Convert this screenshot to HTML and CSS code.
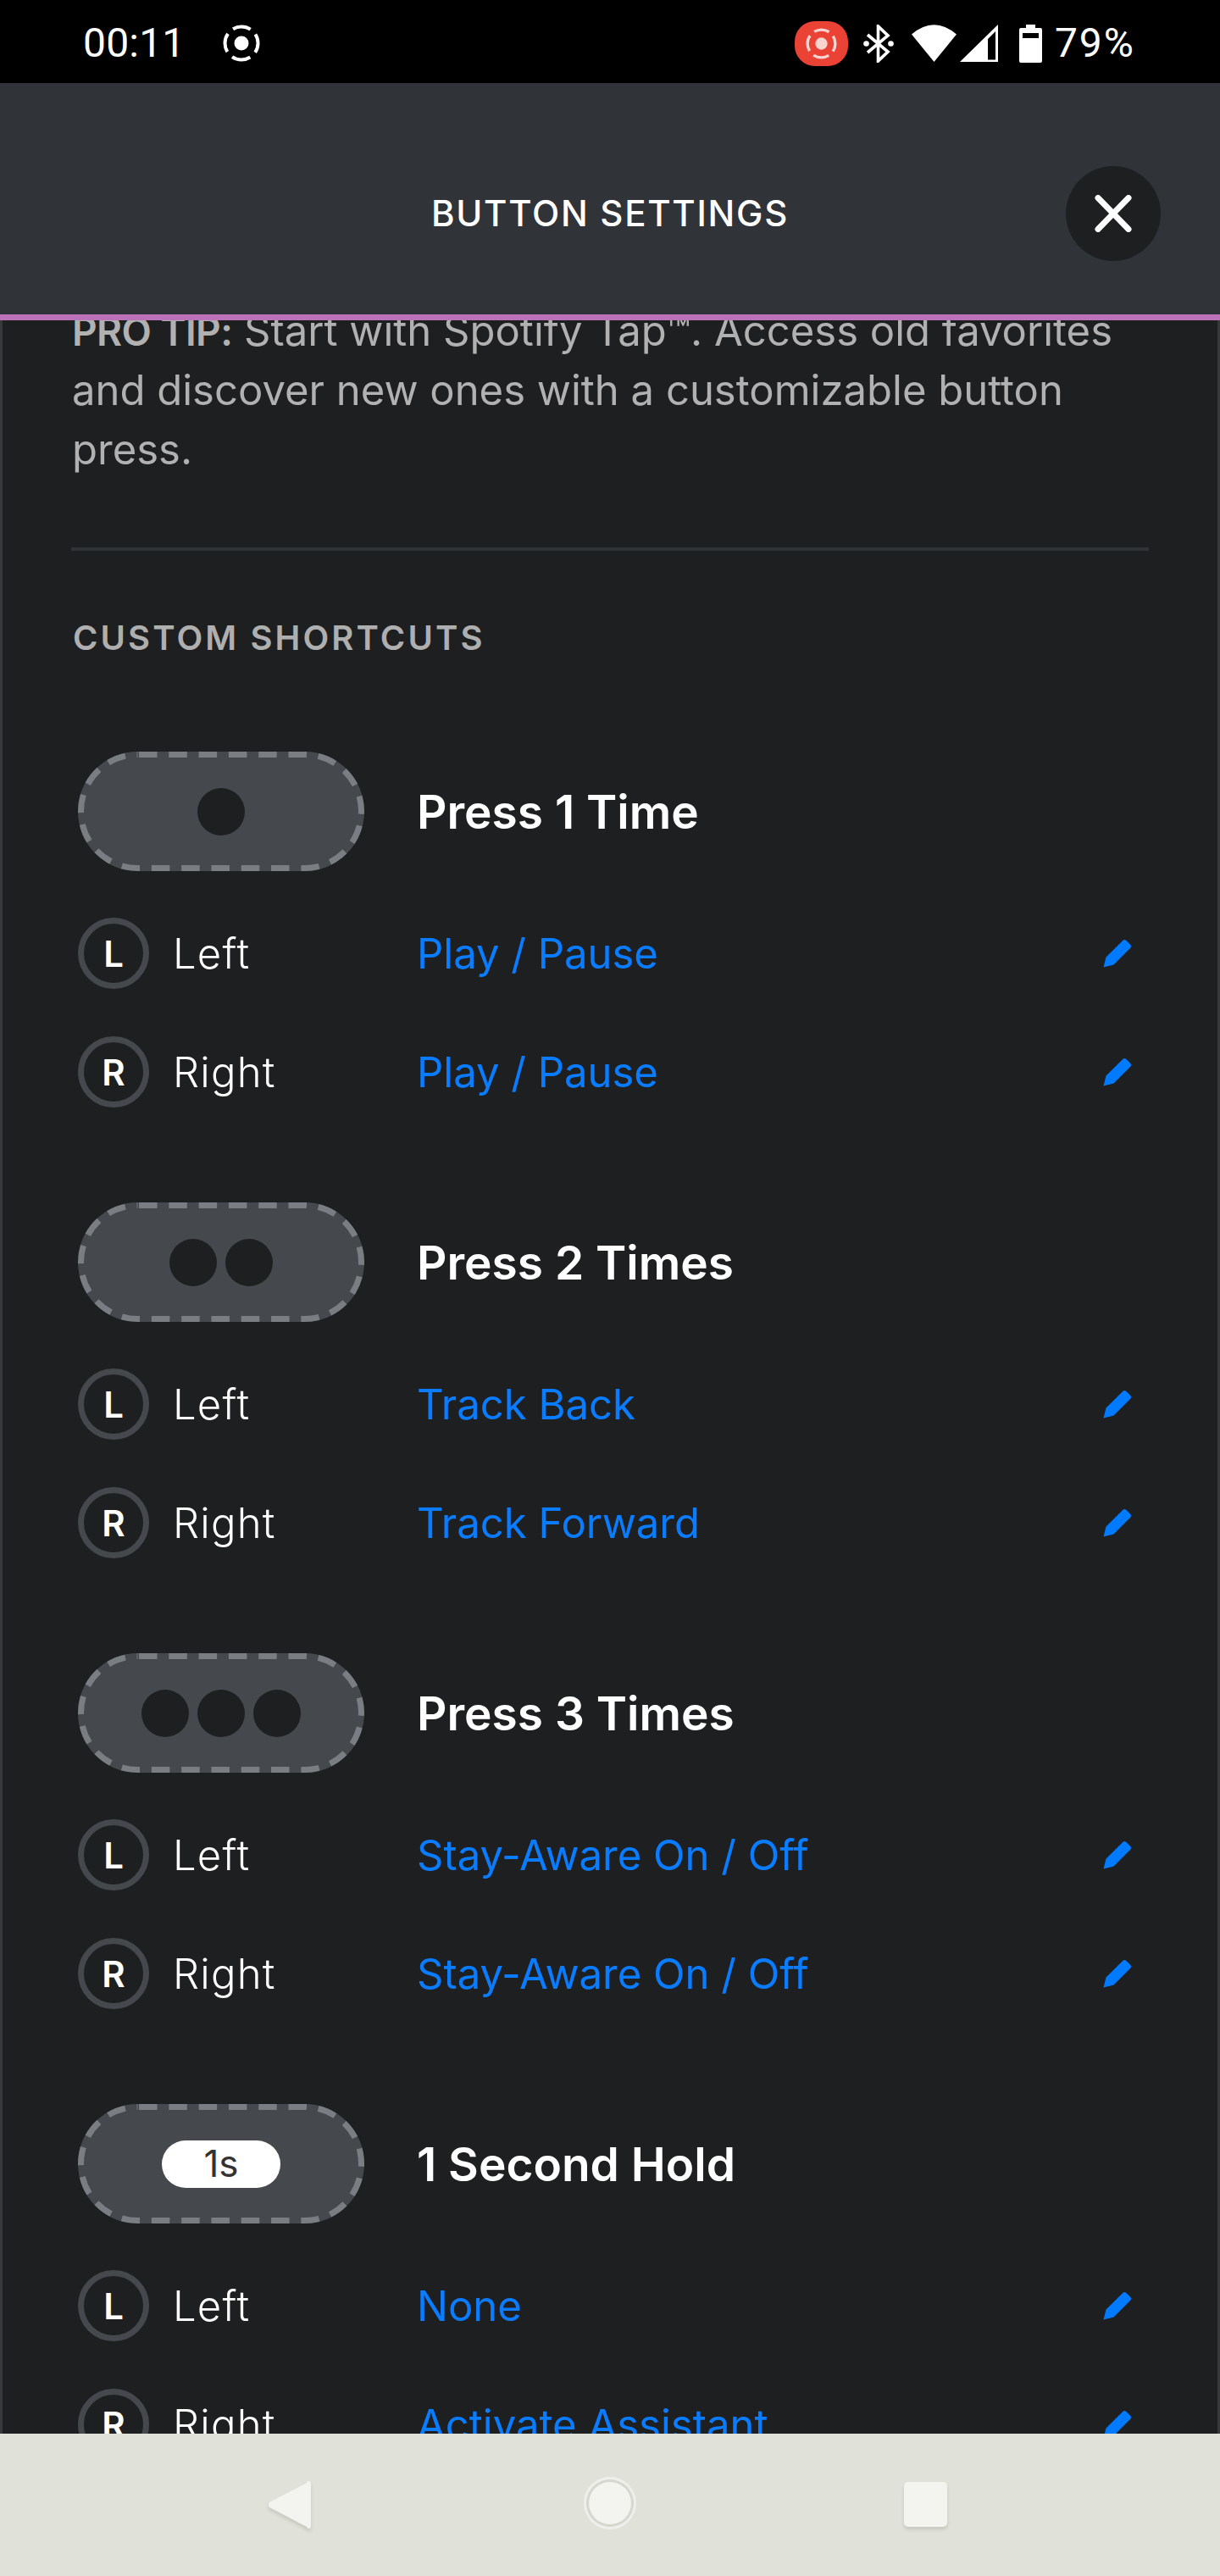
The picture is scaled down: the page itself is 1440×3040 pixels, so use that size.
FILE: index.html
```html
<!DOCTYPE html>
<html lang="en">
<head>
    <meta charset="UTF-8">
    <title>Button Settings</title>
    <link rel="stylesheet" href="styles.css">
</head>
<body>
<svg class="defs" width="0" height="0">
    <symbol id="pencil" viewBox="0 0 34 34">
        <path d="M0.5 33.5L3.5 21.5L23 2.2Q25.3 0 27.6 2.2L32 6.4Q34.2 8.7 32 11L12.5 30.5Z"/>
    </symbol>
    <symbol id="outline" viewBox="0 0 338 141">
        <rect class="outline-fill" x="0" y="0" width="338" height="141" rx="70.5"/>
        <rect class="outline-dash" x="3.5" y="3.5" width="331" height="134" rx="67"/>
    </symbol>
    <symbol id="rec" viewBox="0 0 44 44">
        <circle cx="22" cy="22" r="8.5" fill="currentColor"/>
        <circle cx="22" cy="22" r="19.5" fill="none" stroke="currentColor" stroke-width="4" stroke-dasharray="22.5 8.13" stroke-dashoffset="11.25" transform="rotate(-90 22 22)"/>
    </symbol>
</svg>

<div class="status">
    <div class="status-left">
        <span class="clock">00:11</span>
        <svg class="rec-icon" width="44" height="44"><use href="#rec"/></svg>
    </div>
    <div class="status-right">
        <span class="rec-badge"><svg width="37" height="37"><use href="#rec"/></svg></span>
        <svg class="bt" width="36" height="45" viewBox="0 0 36 45">
            <path d="M5 12L29 32L17.5 43V2L29 13L5 33" fill="none" stroke="#fff" stroke-width="3.6"/>
            <circle cx="3.5" cy="22.5" r="3.3" fill="#fff"/>
            <circle cx="32.5" cy="22.5" r="3.3" fill="#fff"/>
        </svg>
        <svg class="wifi" width="53" height="44" viewBox="0 0 53 44">
            <path d="M0 11.5Q26.5 -11 53 11.5L26.5 44Z" fill="#fff"/>
        </svg>
        <svg class="signal" width="45" height="44" viewBox="0 0 45 44">
            <path d="M0 44L45 0V44ZM33 41.5H42V8L33 17Z" fill="#fff" fill-rule="evenodd"/>
        </svg>
        <svg class="battery" width="27" height="45" viewBox="0 0 27 45">
            <path d="M8 0H19V4H25Q27 4 27 6V43Q27 45 25 45H2Q0 45 0 43V6Q0 4 2 4H8ZM4 10V16H23V10Z" fill="#fff" fill-rule="evenodd"/>
        </svg>
        <span class="percent">79%</span>
    </div>
</div>

<header class="topbar">
    <h1>BUTTON SETTINGS</h1>
    <button class="close" type="button">
        <svg width="44" height="44" viewBox="0 0 44 44"><path d="M4 3.5L40 40.5M40 3.5L4 40.5" stroke="#fff" stroke-width="7" stroke-linecap="round"/></svg>
    </button>
</header>

<main class="content">
    <div class="scroller">
        <p class="tip"><strong>PRO TIP:</strong> Start with Spotify Tap™. Access old favorites and discover new ones with a customizable button press.</p>
        <div class="divider"></div>
        <h2 class="section">CUSTOM SHORTCUTS</h2>

        <section class="group">
            <div class="gesture">
                <div class="pill"><svg class="pill-bg"><use href="#outline"/></svg><i class="dot"></i></div>
                <h3>Press 1 Time</h3>
            </div>
            <div class="row">
                <div class="side"><span class="badge">L</span><span class="side-name">Left</span></div>
                <div class="value">Play / Pause</div>
                <svg class="pencil"><use href="#pencil"/></svg>
            </div>
            <div class="row">
                <div class="side"><span class="badge">R</span><span class="side-name">Right</span></div>
                <div class="value">Play / Pause</div>
                <svg class="pencil"><use href="#pencil"/></svg>
            </div>
        </section>

        <section class="group">
            <div class="gesture">
                <div class="pill"><svg class="pill-bg"><use href="#outline"/></svg><i class="dot"></i><i class="dot"></i></div>
                <h3>Press 2 Times</h3>
            </div>
            <div class="row">
                <div class="side"><span class="badge">L</span><span class="side-name">Left</span></div>
                <div class="value">Track Back</div>
                <svg class="pencil"><use href="#pencil"/></svg>
            </div>
            <div class="row">
                <div class="side"><span class="badge">R</span><span class="side-name">Right</span></div>
                <div class="value">Track Forward</div>
                <svg class="pencil"><use href="#pencil"/></svg>
            </div>
        </section>

        <section class="group">
            <div class="gesture">
                <div class="pill"><svg class="pill-bg"><use href="#outline"/></svg><i class="dot"></i><i class="dot"></i><i class="dot"></i></div>
                <h3>Press 3 Times</h3>
            </div>
            <div class="row">
                <div class="side"><span class="badge">L</span><span class="side-name">Left</span></div>
                <div class="value">Stay-Aware On / Off</div>
                <svg class="pencil"><use href="#pencil"/></svg>
            </div>
            <div class="row">
                <div class="side"><span class="badge">R</span><span class="side-name">Right</span></div>
                <div class="value">Stay-Aware On / Off</div>
                <svg class="pencil"><use href="#pencil"/></svg>
            </div>
        </section>

        <section class="group">
            <div class="gesture">
                <div class="pill"><svg class="pill-bg"><use href="#outline"/></svg><span class="hold">1s</span></div>
                <h3>1 Second Hold</h3>
            </div>
            <div class="row">
                <div class="side"><span class="badge">L</span><span class="side-name">Left</span></div>
                <div class="value">None</div>
                <svg class="pencil"><use href="#pencil"/></svg>
            </div>
            <div class="row">
                <div class="side"><span class="badge">R</span><span class="side-name">Right</span></div>
                <div class="value">Activate Assistant</div>
                <svg class="pencil"><use href="#pencil"/></svg>
            </div>
        </section>
    </div>
</main>

<nav class="navbar">
    <svg class="nav-back" width="50" height="56" viewBox="0 0 50 56"><path d="M47 0Q50 0 50 3V53Q50 56 47 56Q46 56 45 54L1 31Q-1 28 1 25L45 2Q46 0 47 0Z"/></svg>
    <span class="nav-home"></span>
    <span class="nav-recent"></span>
</nav>
</body>
</html>
```

FILE: styles.css
```css
* {
    box-sizing: border-box;
}
html, body {
    margin: 0;
    padding: 0;
}
body {
    width: 1440px;
    height: 3040px;
    display: flex;
    flex-direction: column;
    overflow: hidden;
    background-color: #1e1f21;
    color: #fff;
    font-family: Inter, "Liberation Sans", sans-serif;
}
.defs {
    position: absolute;
}

/* status bar */
.status {
    height: 98px;
    flex: none;
    background-color: #000;
    display: flex;
    justify-content: space-between;
    align-items: center;
    padding: 0 100px 0 98px;
    font-family: Roboto, sans-serif;
    font-size: 48px;
}
.status-left {
    display: flex;
    align-items: center;
    gap: 44px;
    padding-top: 4px;
}
.clock {
    letter-spacing: 0.2px;
    line-height: 44px;
}
.rec-icon {
    color: #fff;
}
.status-right {
    display: flex;
    align-items: center;
    padding-top: 4px;
}
.rec-badge {
    width: 63px;
    height: 53px;
    border-radius: 24px;
    background-color: #ea4335;
    color: #f7d4d0;
    display: flex;
    align-items: center;
    justify-content: center;
    margin-right: 18px;
}
.bt {
    margin-right: 21px;
}
.wifi {
    margin-right: 4px;
}
.signal {
    margin-right: 25px;
}
.battery {
    margin-right: 15px;
}
.percent {
    letter-spacing: 2px;
    line-height: 44px;
}

/* header */
.topbar {
    height: 280px;
    flex: none;
    background-color: #303338;
    border-bottom: 7px solid #bb72b8;
    display: flex;
    align-items: center;
    justify-content: center;
    padding-top: 34px;
    position: relative;
    z-index: 1;
}
.topbar h1 {
    margin: 0;
    font-size: 42px;
    font-weight: 500;
    letter-spacing: 1.7px;
}
.close {
    position: absolute;
    right: 70px;
    top: 98px;
    width: 112px;
    height: 112px;
    border: none;
    border-radius: 50%;
    padding: 0;
    background-color: #1e1f21;
    display: flex;
    align-items: center;
    justify-content: center;
}

/* scrolled content */
.content {
    flex: 1;
    min-height: 0;
    overflow: hidden;
    border-left: 3px solid #36383b;
    border-right: 3px solid #36383b;
}
.scroller {
    margin-top: -22px;
}
.tip {
    margin: 0 0 80px 82px;
    width: 1272px;
    font-size: 49px;
    line-height: 70px;
    color: #b1b1b1;
}
.tip strong {
    font-size: 46px;
    font-weight: 600;
    letter-spacing: -0.6px;
}
.divider {
    height: 4px;
    margin: 0 81px 0 81px;
    background-color: #2f3338;
}
.section {
    margin: 78px 0 109px 83px;
    font-size: 40px;
    line-height: 50px;
    font-weight: 600;
    letter-spacing: 3.1px;
    color: #afafaf;
}
.group {
    margin: 0 101px 112px 89px;
}
.gesture {
    display: flex;
    align-items: center;
    gap: 62px;
}
.gesture h3 {
    margin: 0;
    font-size: 55px;
    font-weight: 600;
}
.pill {
    width: 338px;
    height: 141px;
    position: relative;
    display: flex;
    align-items: center;
    justify-content: center;
    gap: 10px;
}
.pill-bg {
    position: absolute;
    left: 0;
    top: 0;
    width: 338px;
    height: 141px;
}
.outline-fill {
    fill: #45484d;
}
.outline-dash {
    fill: none;
    stroke: #7a7d82;
    stroke-width: 7;
    stroke-dasharray: 21.5 13.8;
    stroke-dashoffset: -1.5;
}
.dot {
    width: 56px;
    height: 56px;
    border-radius: 50%;
    background-color: #1e1f21;
    position: relative;
}
.hold {
    width: 140px;
    height: 56px;
    border-radius: 28px;
    background-color: #fff;
    color: #333;
    font-size: 44px;
    line-height: 54px;
    text-align: center;
    position: relative;
}
.row {
    height: 84px;
    margin-top: 56px;
    display: flex;
    align-items: center;
    font-size: 49px;
}
.gesture + .row {
    margin-top: 55px;
}
.side {
    width: 400px;
    flex: none;
    display: flex;
    align-items: center;
    gap: 28px;
}
.side-name {
    font-weight: 300;
    letter-spacing: 1.2px;
}
.badge {
    width: 84px;
    height: 84px;
    flex: none;
    border: 7px solid #45484d;
    border-radius: 50%;
    display: flex;
    align-items: center;
    justify-content: center;
    font-size: 42px;
    font-weight: 600;
}
.value {
    flex: 1;
    color: #0a7cff;
    font-weight: 400;
}
.pencil {
    width: 34px;
    height: 34px;
    flex: none;
    fill: #007aff;
}

/* android nav */
.navbar {
    height: 168px;
    flex: none;
    background-color: #e0e2da;
    position: relative;
    z-index: 1;
}
.nav-back,
.nav-home,
.nav-recent {
    position: absolute;
    fill: #f3f4ef;
    filter: drop-shadow(0 3px 2px rgba(0, 0, 0, 0.12));
}
.nav-back {
    left: 317px;
    top: 56px;
}
.nav-home {
    left: 695px;
    top: 57px;
    width: 50px;
    height: 50px;
    border-radius: 50%;
    background-color: #f3f4ef;
    box-shadow: 0 0 0 3px #d6d7d0, 0 0 0 6px #eeefea;
    filter: none;
}
.nav-recent {
    left: 1067px;
    top: 57px;
    width: 51px;
    height: 53px;
    border-radius: 5px;
    background-color: #f3f4ef;
}
```
